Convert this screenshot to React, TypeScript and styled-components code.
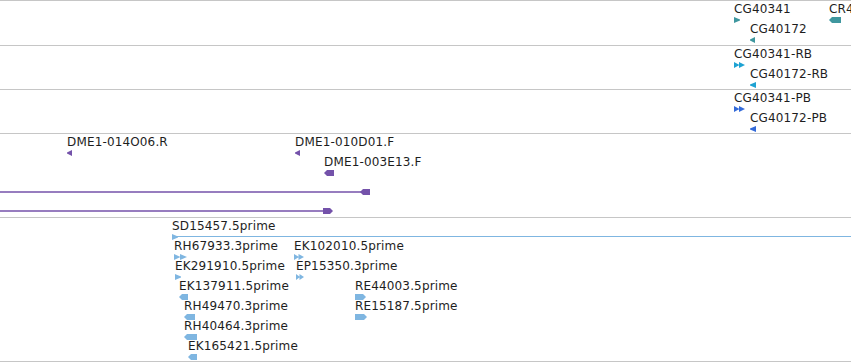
import React from "react";
import styled, { createGlobalStyle } from "styled-components";

const GlobalStyle = createGlobalStyle`
  html, body {
    margin: 0;
    padding: 0;
    background: #fff;
  }
  body {
    font-family: "DejaVu Sans", Verdana, sans-serif;
  }
`;

type Shape = "triRight" | "triLeft" | "doubleRight" | "arrowLeft" | "arrowRight";

type Feat = {
  label: string;
  x: number;
  row: number;
  shape: Shape;
  w: number;
};

const Panel = styled.div`
  width: 851px;
  border-top: 1px solid #c6c6c6;
  overflow: hidden;
`;

const Track = styled.div<{ $h: number }>`
  position: relative;
  height: ${(p) => p.$h}px;
  border-bottom: 1px solid #c6c6c6;
  overflow: hidden;
`;

const Feature = styled.div<{ $x: number; $row: number }>`
  position: absolute;
  left: ${(p) => p.$x}px;
  top: ${(p) => 2 + p.$row * 20}px;
  display: flex;
  flex-direction: column;
  align-items: flex-start;
`;

const Label = styled.span`
  display: block;
  font-size: 12px;
  line-height: 13px;
  letter-spacing: 0.15px;
  color: #1e1e1e;
  white-space: nowrap;
`;

const GlyphSvg = styled.svg`
  display: block;
  overflow: visible;
  margin-top: 1px;
`;

const LineLayer = styled.svg<{ $top: number }>`
  position: absolute;
  left: 0;
  top: ${(p) => p.$top}px;
  display: block;
`;

function shapePath(shape: Shape, w: number): string {
  switch (shape) {
    case "triRight":
      return `M0,0 L${w},2.5 L${w},3.5 L0,6 Z`;
    case "triLeft":
      return `M0,2.5 L${w},0 L${w},6 L0,3.5 Z`;
    case "doubleRight": {
      const h = w / 2;
      return `M0,0 L${h},3 L0,6 Z M${h - 0.5},0 L${w},3 L${h - 0.5},6 Z`;
    }
    case "arrowLeft":
      return `M0,3 L3,0 L${w},0 L${w},6 L3,6 Z`;
    case "arrowRight":
      return `M0,0 L${w - 3},0 L${w},3 L${w - 3},6 L0,6 Z`;
  }
}

const Glyph: React.FC<{ shape: Shape; w: number; color: string }> = ({ shape, w, color }) => (
  <GlyphSvg width={w} height={6} viewBox={`0 0 ${w} 6`}>
    <path d={shapePath(shape, w)} fill={color} />
  </GlyphSvg>
);

const FeatureList: React.FC<{ items: Feat[]; color: string }> = ({ items, color }) => (
  <>
    {items.map((f) => (
      <Feature key={f.label} $x={f.x} $row={f.row}>
        <Label>{f.label}</Label>
        <Glyph shape={f.shape} w={f.w} color={color} />
      </Feature>
    ))}
  </>
);

const geneTrack: Feat[] = [
  { label: "CG40341", x: 734, row: 0, shape: "triRight", w: 6 },
  { label: "CR4", x: 829, row: 0, shape: "arrowLeft", w: 12 },
  { label: "CG40172", x: 750, row: 1, shape: "triLeft", w: 5 },
];

const rnaTrack: Feat[] = [
  { label: "CG40341-RB", x: 734, row: 0, shape: "doubleRight", w: 11 },
  { label: "CG40172-RB", x: 750, row: 1, shape: "triLeft", w: 6 },
];

const protTrack: Feat[] = [
  { label: "CG40341-PB", x: 734, row: 0, shape: "doubleRight", w: 11 },
  { label: "CG40172-PB", x: 750, row: 1, shape: "triLeft", w: 6 },
];

const bacTrack: Feat[] = [
  { label: "DME1-014O06.R", x: 67, row: 0, shape: "triLeft", w: 5 },
  { label: "DME1-010D01.F", x: 295, row: 0, shape: "triLeft", w: 5 },
  { label: "DME1-003E13.F", x: 324, row: 1, shape: "arrowLeft", w: 10 },
];

const estTrack: Feat[] = [
  { label: "SD15457.5prime", x: 172, row: 0, shape: "triRight", w: 6 },
  { label: "RH67933.3prime", x: 174, row: 1, shape: "doubleRight", w: 13 },
  { label: "EK102010.5prime", x: 294, row: 1, shape: "doubleRight", w: 10 },
  { label: "EK291910.5prime", x: 175, row: 2, shape: "triRight", w: 6 },
  { label: "EP15350.3prime", x: 296, row: 2, shape: "doubleRight", w: 8 },
  { label: "EK137911.5prime", x: 179, row: 3, shape: "arrowLeft", w: 9 },
  { label: "RE44003.5prime", x: 355, row: 3, shape: "arrowRight", w: 11 },
  { label: "RH49470.3prime", x: 184, row: 4, shape: "arrowLeft", w: 11 },
  { label: "RE15187.5prime", x: 355, row: 4, shape: "arrowRight", w: 12 },
  { label: "RH40464.3prime", x: 184, row: 5, shape: "arrowLeft", w: 13 },
  { label: "EK165421.5prime", x: 188, row: 6, shape: "arrowLeft", w: 9 },
];

const PURPLE = "#7452aa";
const EST_BLUE = "#7fb6e1";

export default function App() {
  return (
    <>
      <GlobalStyle />
      <Panel>
        <Track $h={44}>
          <FeatureList items={geneTrack} color="#3f979f" />
        </Track>
        <Track $h={43}>
          <FeatureList items={rnaTrack} color="#1ea2d2" />
        </Track>
        <Track $h={43}>
          <FeatureList items={protTrack} color="#346bd9" />
        </Track>
        <Track $h={83}>
          <FeatureList items={bacTrack} color={PURPLE} />
          <LineLayer $top={52} width={851} height={30}>
            <line x1={0} y1={6} x2={362} y2={6} stroke={PURPLE} strokeWidth={1.4} />
            <path d="M360,6 L363,3 L370,3 L370,9 L363,9 Z" fill={PURPLE} />
            <line x1={0} y1={25} x2={325} y2={25} stroke={PURPLE} strokeWidth={1.4} />
            <path d="M323,22 L330,22 L333,25 L330,28 L323,28 Z" fill={PURPLE} />
          </LineLayer>
        </Track>
        <Track $h={143}>
          <LineLayer $top={17} width={851} height={3}>
            <line x1={172} y1={1.5} x2={851} y2={1.5} stroke={EST_BLUE} strokeWidth={1} />
          </LineLayer>
          <FeatureList items={estTrack} color={EST_BLUE} />
        </Track>
      </Panel>
    </>
  );
}
